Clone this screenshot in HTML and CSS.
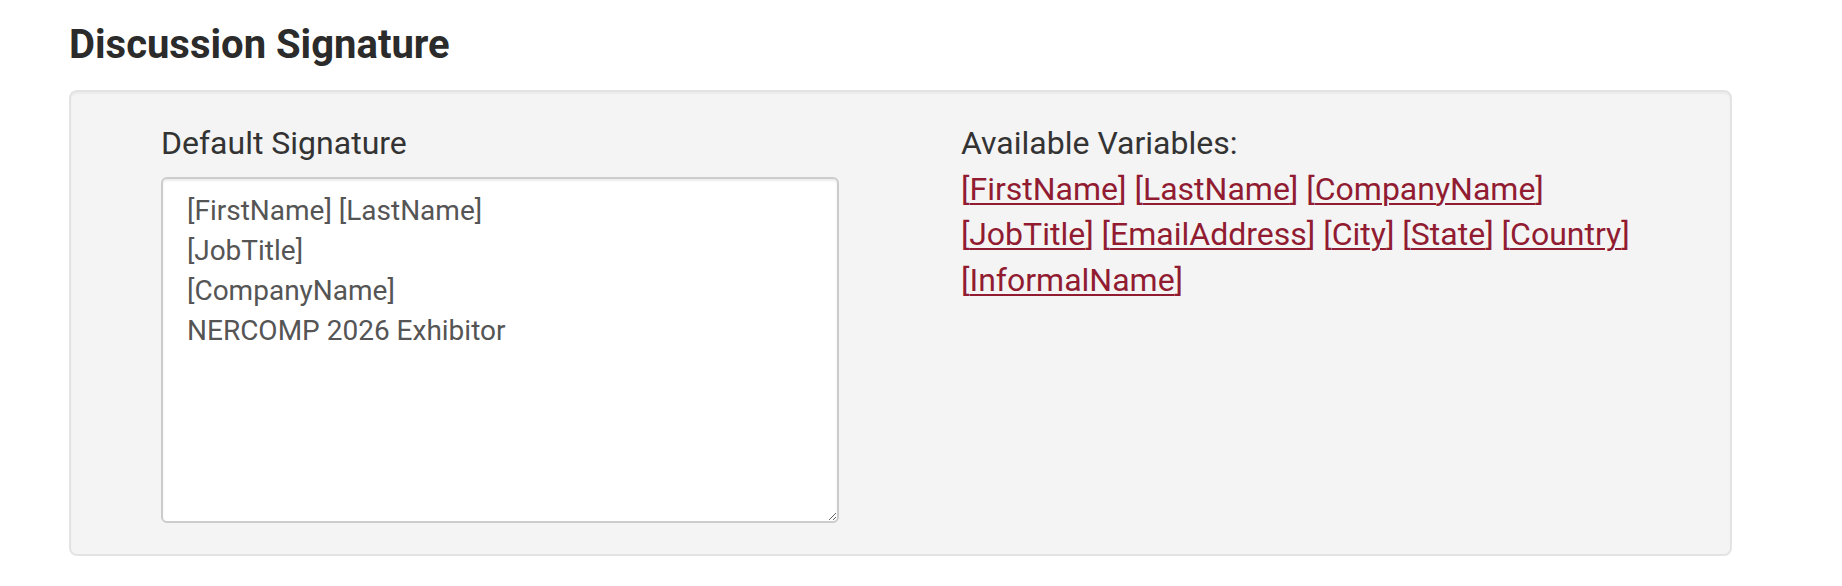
FILE: index.html
```html
<!DOCTYPE html>
<html lang="en">
<head>
    <meta charset="UTF-8">
    <meta name="viewport" content="width=device-width, initial-scale=1.0">
    <title>Discussion Signature</title>
    <link rel="stylesheet" href="styles.css">
</head>
<body>
    <div class="container">
        <!-- section title -->
        <h3 class="section-title">Discussion Signature</h3>

        <div class="well">
            <div class="row">
                <!-- signature editor -->
                <div class="col-editor">
                    <label class="field-label" for="signature">Default Signature</label>
                    <textarea id="signature" class="form-control">[FirstName] [LastName]
[JobTitle]
[CompanyName]
NERCOMP 2026 Exhibitor</textarea>
                </div>

                <!-- variable list -->
                <div class="col-vars">
                    <div class="vars-title">Available Variables:</div>
                    <div class="vars-list">
                        <span class="var">[<a href="#">FirstName</a>]</span>
                        <span class="var">[<a href="#">LastName</a>]</span>
                        <span class="var">[<a href="#">CompanyName</a>]</span>
                        <span class="var">[<a href="#">JobTitle</a>]</span>
                        <span class="var">[<a href="#">EmailAddress</a>]</span>
                        <span class="var">[<a href="#">City</a>]</span>
                        <span class="var">[<a href="#">State</a>]</span>
                        <span class="var">[<a href="#">Country</a>]</span>
                        <span class="var">[<a href="#">InformalName</a>]</span>
                    </div>
                </div>
            </div>
        </div>
    </div>
</body>
</html>
```

FILE: styles.css
```css
/* base */
* {
    box-sizing: border-box;
}
body {
    font-family: Roboto, "Liberation Sans", Arial, sans-serif;
    margin: 0;
    padding: 0;
    background: #ffffff;
    color: #333333;
}
.container {
    margin-left: 69px;
    width: 1663px;
}
.section-title {
    font-size: 40px;
    font-weight: 700;
    line-height: 1.1;
    color: #2b2b2b;
    margin: 23px 0 23px 0;
}
.well {
    background-color: #f4f4f4;
    border: 2px solid #e3e3e3;
    border-radius: 8px;
    box-shadow: inset 0 2px 2px rgba(0, 0, 0, 0.04);
    padding: 29px 0 31px 90px;
}
.row {
    display: grid;
    grid-template-columns: 678px 700px;
    column-gap: 122px;
}
.field-label {
    display: block;
    font-size: 32px;
    line-height: 1.42857;
    font-weight: 400;
    color: #333333;
    margin-bottom: 10px;
}
.form-control {
    display: block;
    width: 100%;
    height: 346px;
    padding: 12px 24px;
    font-family: Roboto, "Liberation Sans", Arial, sans-serif;
    font-size: 28px;
    line-height: 40px;
    color: #555555;
    background: #ffffff;
    border: 2px solid #cccccc;
    border-radius: 6px;
    box-shadow: inset 0 2px 2px rgba(0, 0, 0, 0.075);
    margin: 0;
}
.vars-title {
    font-size: 32px;
    line-height: 1.42857;
    color: #333333;
}
.vars-list {
    font-size: 32px;
    line-height: 1.42857;
}
.var {
    color: #911c32;
}
.var a {
    color: #911c32;
    text-decoration: underline;
    text-decoration-thickness: 2px;
    text-underline-offset: 3px;
}
```
